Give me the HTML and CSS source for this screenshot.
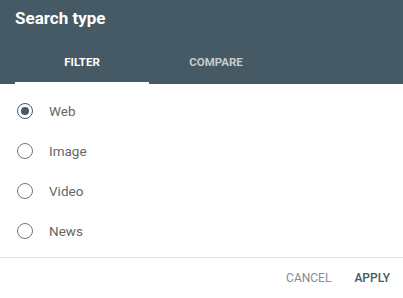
FILE: index.html
```html
<!DOCTYPE html>
<html lang="en">

<head>
    <meta charset="UTF-8">
    <meta name="viewport" content="width=device-width, initial-scale=1.0">
    <title>Search type</title>
    <link rel="stylesheet" href="styles.css">
</head>

<body>
    <div class="dialog">
        <div class="dialog-header">
            <h1 class="dialog-title">Search type</h1>
            <div class="tabs">
                <div class="tab active">FILTER</div>
                <div class="tab">COMPARE</div>
            </div>
        </div>

        <div class="options">
            <label class="option">
                <span class="radio checked"></span>
                <span class="option-label">Web</span>
            </label>
            <label class="option">
                <span class="radio"></span>
                <span class="option-label">Image</span>
            </label>
            <label class="option">
                <span class="radio"></span>
                <span class="option-label">Video</span>
            </label>
            <label class="option">
                <span class="radio"></span>
                <span class="option-label">News</span>
            </label>
        </div>

        <div class="dialog-actions">
            <button class="btn btn-cancel">CANCEL</button>
            <button class="btn btn-apply">APPLY</button>
        </div>
    </div>
</body>

</html>
```

FILE: styles.css
```css
body {
    margin: 0;
    font-family: Roboto, "Noto Sans", Arial, sans-serif;
    background: #fff;
}

.dialog {
    width: 403px;
    height: 298px;
    display: flex;
    flex-direction: column;
    background: #fff;
}

.dialog-header {
    background: #455a64;
    height: 84px;
    display: flex;
    flex-direction: column;
    box-sizing: border-box;
    padding: 0 15px;
}

.dialog-title {
    margin: 0;
    padding-top: 7px;
    font-size: 17px;
    line-height: 22px;
    font-weight: 700;
    color: #fff;
}

.tabs {
    margin-top: auto;
    display: flex;
    height: 42px;
}

.tab {
    width: 134px;
    display: flex;
    align-items: center;
    justify-content: center;
    font-size: 11.5px;
    font-weight: 700;
    color: #c4ccd0;
    box-sizing: border-box;
    border-bottom: 2px solid transparent;
}

.tab.active {
    color: #fff;
    border-bottom-color: #fff;
}

.options {
    display: flex;
    flex-direction: column;
    padding: 7px 0 6px;
    border-bottom: 1px solid #e0e0e0;
}

.option {
    height: 40px;
    display: flex;
    align-items: center;
    padding-left: 17px;
}

.radio {
    width: 16px;
    height: 16px;
    box-sizing: border-box;
    border: 1.5px solid #757575;
    border-radius: 50%;
    display: flex;
    align-items: center;
    justify-content: center;
    margin-right: 16px;
}

.radio.checked {
    border-color: #455a64;
}

.radio.checked::after {
    content: "";
    width: 8px;
    height: 8px;
    border-radius: 50%;
    background: #455a64;
}

.option-label {
    font-size: 13.5px;
    color: #666;
}

.dialog-actions {
    flex: 1;
    display: flex;
    align-items: center;
    justify-content: flex-end;
    gap: 23px;
    padding-right: 13px;
}

.btn {
    border: 0;
    background: none;
    padding: 0;
    font-family: inherit;
    font-size: 12px;
    cursor: pointer;
}

.btn-cancel {
    font-weight: 400;
    color: #8a8a8a;
}

.btn-apply {
    font-weight: 500;
    color: #455a64;
}
```
